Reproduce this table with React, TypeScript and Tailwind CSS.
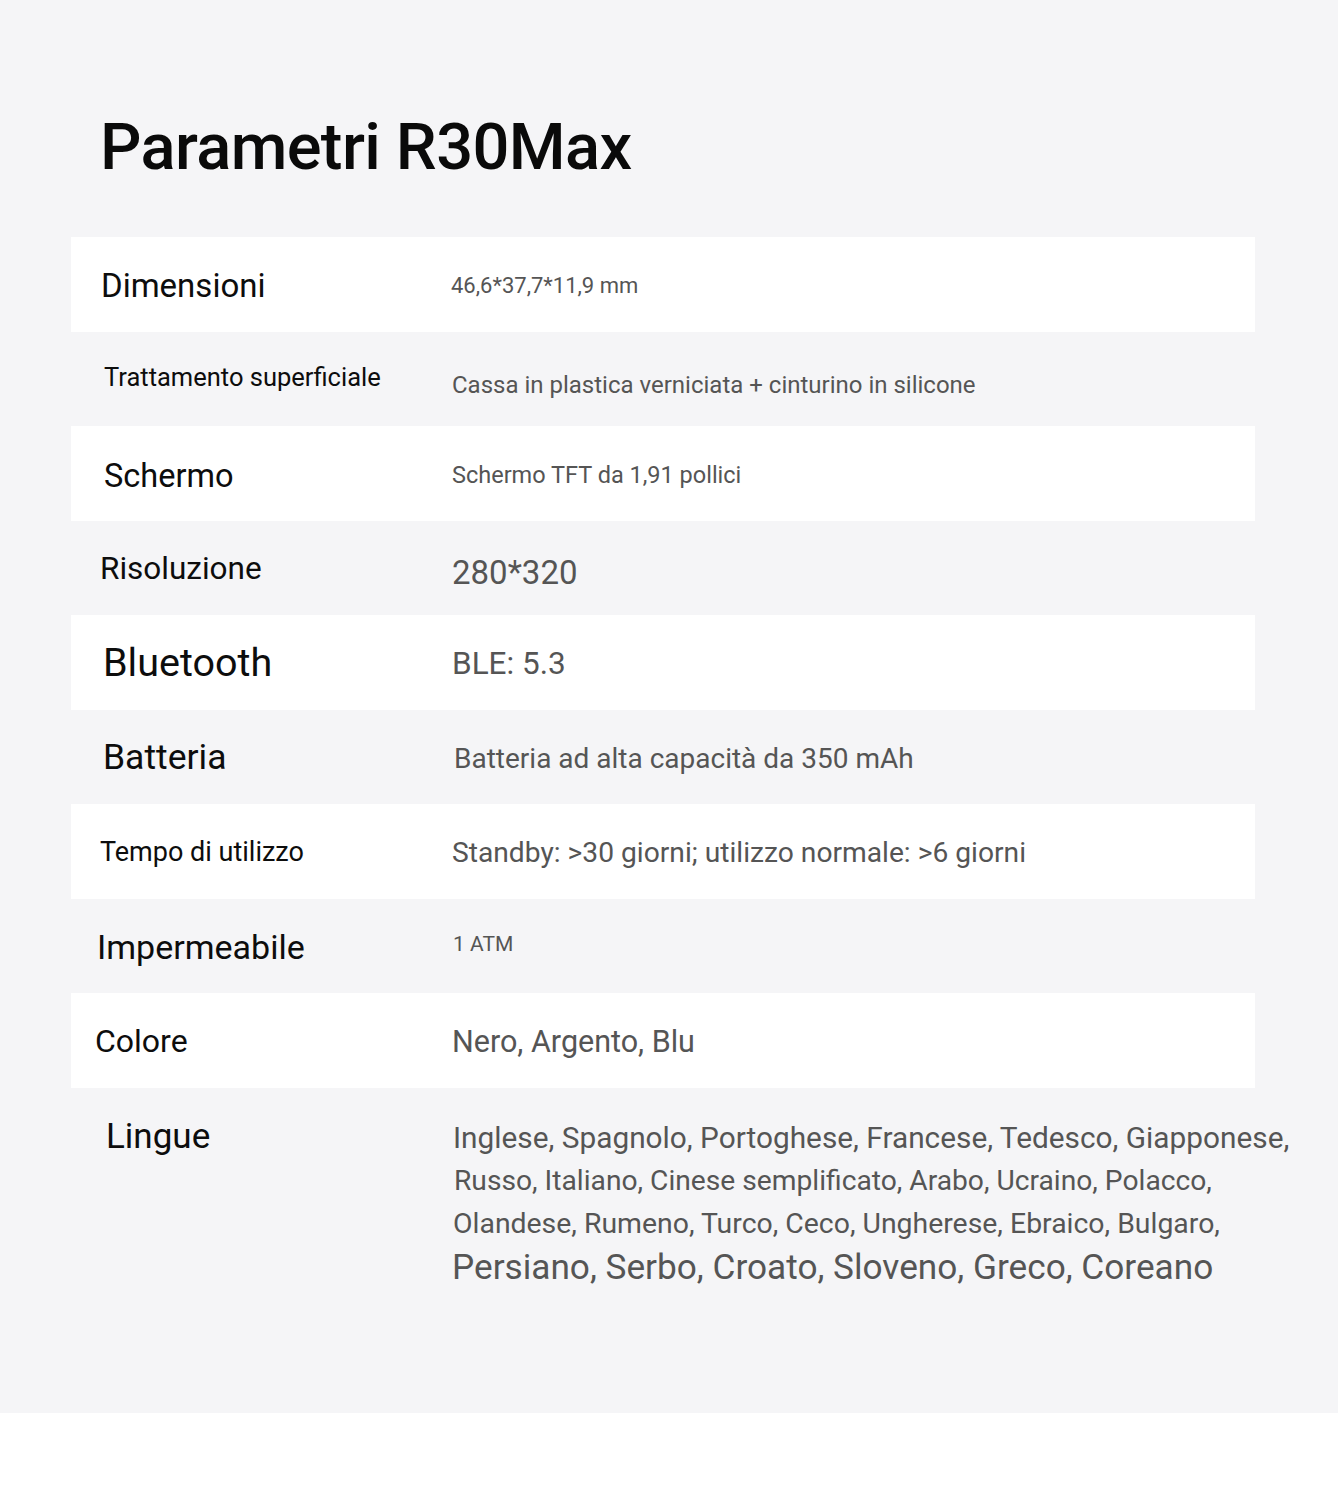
import React from "react";

type Row = {
  label: string;
  value: string;
  white: boolean;
  lc: string; // label classes
  vc: string; // value classes
};

const rows: Row[] = [
  { label: "Dimensioni", value: "46,6*37,7*11,9 mm", white: true, lc: "pl-[30px] text-[33px] mt-[2px]", vc: "pl-0 text-[22px] mt-[4px]" },
  { label: "Trattamento superficiale", value: "Cassa in plastica verniciata + cinturino in silicone", white: false, lc: "pl-[33px] text-[25.5px] -mt-[2px]", vc: "pl-[1px] text-[24px] mt-[12px]" },
  { label: "Schermo", value: "Schermo TFT da 1,91 pollici", white: true, lc: "pl-[33px] text-[32.5px] mt-[5px]", vc: "pl-[1px] text-[23.5px] mt-[5px]" },
  { label: "Risoluzione", value: "280*320", white: false, lc: "pl-[29px] text-[31.5px] mt-[2px]", vc: "pl-[1px] text-[33px] mt-[10px]" },
  { label: "Bluetooth", value: "BLE: 5.3", white: true, lc: "pl-[32px] text-[39.5px] mt-[1px]", vc: "pl-[1px] text-[31.5px] mt-[2px]" },
  { label: "Batteria", value: "Batteria ad alta capacità da 350 mAh", white: false, lc: "pl-[32px] text-[35.5px] mt-[2px]", vc: "pl-[3px] text-[28px] mt-[4px]" },
  { label: "Tempo di utilizzo", value: "Standby: >30 giorni; utilizzo normale: >6 giorni", white: true, lc: "pl-[29px] text-[27px] mt-[3px]", vc: "pl-[1px] text-[28.2px] mt-[3px]" },
  { label: "Impermeabile", value: "1 ATM", white: false, lc: "pl-[26px] text-[34px] mt-[2px]", vc: "pl-[2px] text-[21px] -mt-[2px]" },
  { label: "Colore", value: "Nero, Argento, Blu", white: true, lc: "pl-[24px] text-[32px] mt-[2px]", vc: "pl-[1px] text-[30.5px] mt-[4px]" },
];

const font = { fontFamily: "Roboto, 'Noto Sans', sans-serif" };

export default function App() {
  return (
    <div className="w-[1338px] min-h-[1493px] bg-white" style={font}>
      <div className="bg-[#f5f5f7] h-[1413px] pt-[115px]">
        <h1 className="pl-[100px] text-[65px] leading-none font-medium text-[#0a0a0a] tracking-[-0.6px]">
          Parametri R30Max
        </h1>
        <div className="mt-[57px] ml-[71px] w-[1184px] flex flex-col">
          {rows.map((r) => (
            <div
              key={r.label}
              className={`h-[94.5px] flex items-center ${r.white ? "bg-white" : "bg-[#f5f5f7]"}`}
            >
              <div className={`w-[380px] shrink-0 leading-none text-[#0d0d0d] whitespace-nowrap ${r.lc}`}>{r.label}</div>
              <div className={`leading-none text-[#555555] whitespace-nowrap ${r.vc}`}>{r.value}</div>
            </div>
          ))}
          <div className="flex pt-[31px]">
            <div className="w-[381px] shrink-0 pl-[35px] text-[35px] leading-none text-[#0d0d0d]">Lingue</div>
            <div className="flex flex-col text-[#555555] whitespace-nowrap -mt-[3px]">
              <div className="text-[29.8px] leading-[43px] pl-[1px]">Inglese, Spagnolo, Portoghese, Francese, Tedesco, Giapponese,</div>
              <div className="text-[28.2px] leading-[43px] pl-[2px]">Russo, Italiano, Cinese semplificato, Arabo, Ucraino, Polacco,</div>
              <div className="text-[28.4px] leading-[43px] pl-[1px]">Olandese, Rumeno, Turco, Ceco, Ungherese, Ebraico, Bulgaro,</div>
              <div className="text-[35.2px] leading-[44px]">Persiano, Serbo, Croato, Sloveno, Greco, Coreano</div>
            </div>
          </div>
        </div>
      </div>
    </div>
  );
}
